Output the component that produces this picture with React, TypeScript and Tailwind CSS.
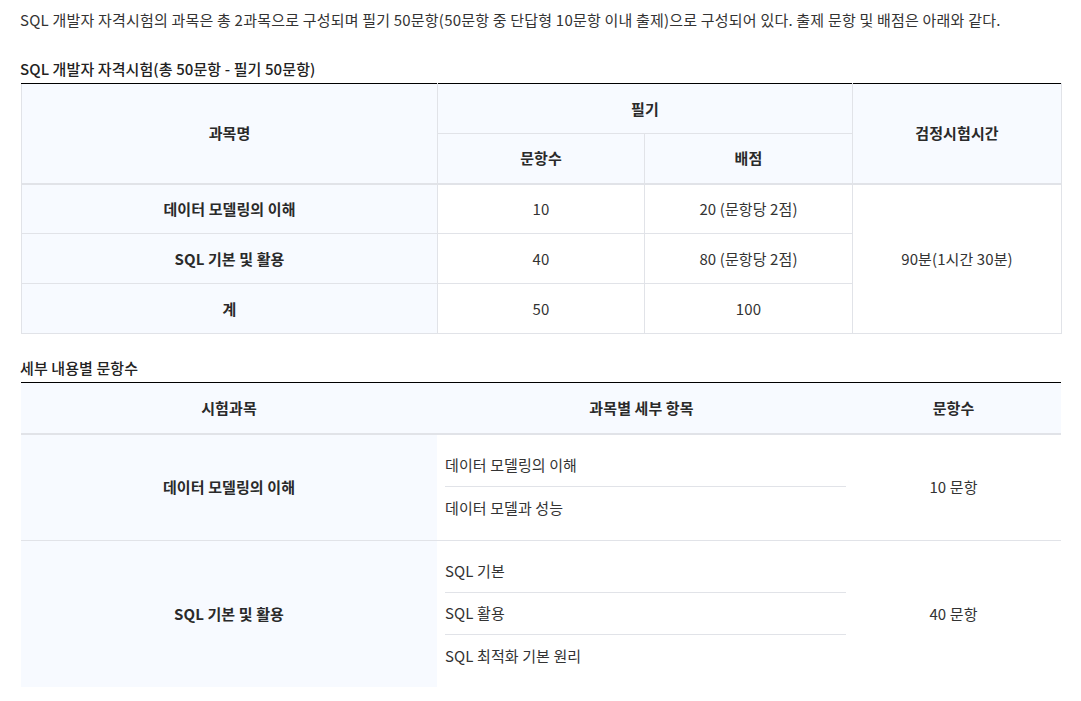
import React from "react";

const font = { fontFamily: '"Noto Sans CJK KR", "Noto Sans", sans-serif' };

function Th({ children, className = "", ...rest }: any) {
  return (
    <th
      className={`border border-[#e1e3e8] bg-[#f7faff] font-semibold text-[#2a2a2a] text-center align-middle ${className}`}
      {...rest}
    >
      {children}
    </th>
  );
}

function Td({ children, className = "", ...rest }: any) {
  return (
    <td
      className={`border border-[#e1e3e8] text-center align-middle text-[#333] ${className}`}
      {...rest}
    >
      {children}
    </td>
  );
}

export default function App() {
  return (
    <div className="bg-white w-[1081px] min-h-[701px] px-[21px] pt-[10px] text-[15px] leading-[20px] text-[#333] tracking-[0.1px]" style={font}>
      <p className="leading-[20px] -ml-px tracking-[0.2px]">
        SQL 개발자 자격시험의 과목은 총 2과목으로 구성되며 필기 50문항(50문항 중 단답형 10문항 이내 출제)으로 구성되어 있다. 출제 문항 및 배점은 아래와 같다.
      </p>

      <h3 className="mt-[29px] mb-[4px] leading-[20px] font-medium text-[#222] -ml-px">
        SQL 개발자 자격시험(총 50문항 - 필기 50문항)
      </h3>
      <table className="w-[1040px] border-collapse border-t border-t-black table-fixed">
        <colgroup>
          <col className="w-[416px]" />
          <col className="w-[207px]" />
          <col className="w-[208px]" />
          <col className="w-[209px]" />
        </colgroup>
        <thead>
          <tr className="h-[50px]">
            <Th rowSpan={2} className="border-b-2 border-t-black">과목명</Th>
            <Th colSpan={2} className="border-t-black">필기</Th>
            <Th rowSpan={2} className="border-b-2 border-t-black">검정시험시간</Th>
          </tr>
          <tr className="h-[50px]">
            <Th className="border-b-2">문항수</Th>
            <Th className="border-b-2">배점</Th>
          </tr>
        </thead>
        <tbody>
          <tr className="h-[50px]">
            <Th>데이터 모델링의 이해</Th>
            <Td>10</Td>
            <Td>20 (문항당 2점)</Td>
            <Td rowSpan={3}>90분(1시간 30분)</Td>
          </tr>
          <tr className="h-[50px]">
            <Th>SQL 기본 및 활용</Th>
            <Td>40</Td>
            <Td>80 (문항당 2점)</Td>
          </tr>
          <tr className="h-[50px]">
            <Th>계</Th>
            <Td>50</Td>
            <Td>100</Td>
          </tr>
        </tbody>
      </table>

      <h3 className="mt-[24px] mb-[4px] leading-[20px] font-medium text-[#222] -ml-px">세부 내용별 문항수</h3>
      <table className="w-[1040px] border-collapse border-t border-t-black table-fixed">
        <colgroup>
          <col className="w-[416px]" />
          <col className="w-[409px]" />
          <col className="w-[215px]" />
        </colgroup>
        <thead>
          <tr className="h-[51px] bg-[#f7faff] border-b-2 border-[#e1e3e8]">
            <th className="font-semibold text-[#2a2a2a]">시험과목</th>
            <th className="font-semibold text-[#2a2a2a]">과목별 세부 항목</th>
            <th className="font-semibold text-[#2a2a2a]">문항수</th>
          </tr>
        </thead>
        <tbody>
          <tr className="border-b border-[#e1e3e8]">
            <th className="bg-[#f7faff] font-semibold text-[#2a2a2a]">데이터 모델링의 이해</th>
            <td className="pt-[10px] pb-[11px]">
              <ul className="ml-[8px]">
                <li className="h-[42px] flex items-center border-b border-[#e1e3e8]">데이터 모델링의 이해</li>
                <li className="h-[42px] flex items-center">데이터 모델과 성능</li>
              </ul>
            </td>
            <td className="text-center">10 문항</td>
          </tr>
          <tr>
            <th className="bg-[#f7faff] font-semibold text-[#2a2a2a]">SQL 기본 및 활용</th>
            <td className="py-[10px]">
              <ul className="ml-[8px]">
                <li className="h-[42px] flex items-center border-b border-[#e1e3e8]">SQL 기본</li>
                <li className="h-[42px] flex items-center border-b border-[#e1e3e8]">SQL 활용</li>
                <li className="h-[42px] flex items-center">SQL 최적화 기본 원리</li>
              </ul>
            </td>
            <td className="text-center">40 문항</td>
          </tr>
        </tbody>
      </table>
    </div>
  );
}
